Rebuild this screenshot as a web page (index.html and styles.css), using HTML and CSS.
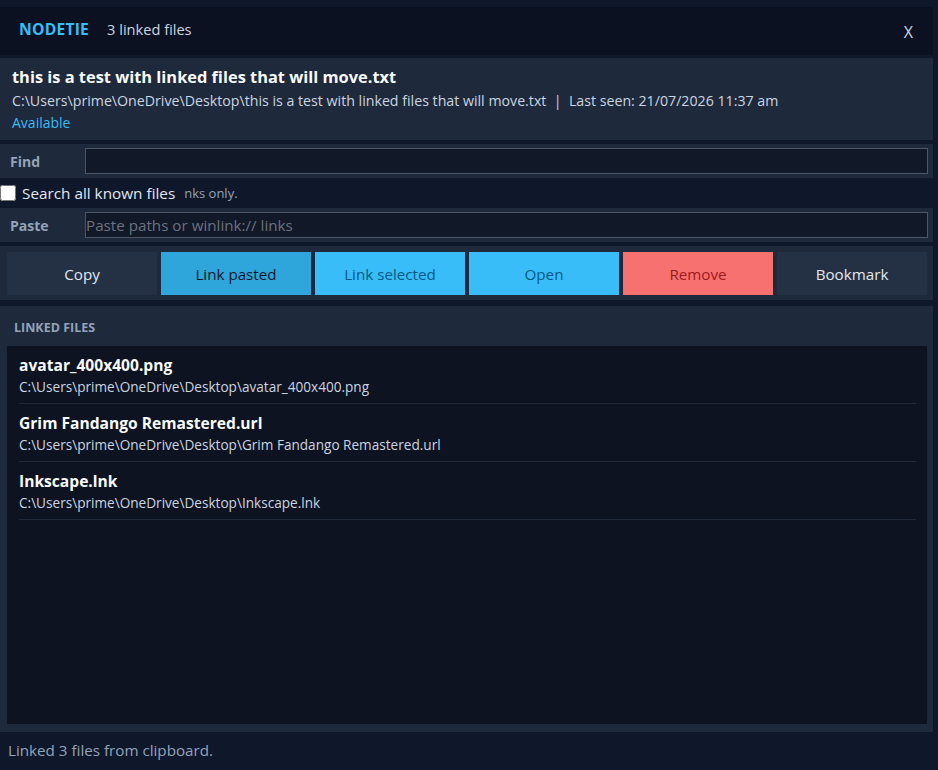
FILE: index.html
```
<!DOCTYPE html>
<html lang="en">

<head>
  <meta charset="UTF-8">
  <meta name="viewport" content="width=device-width, initial-scale=1.0">
  <title>NodeTie</title>
  <link rel="stylesheet" href="styles.css">
</head>

<body>
  <div class="app">
    <div class="header">
      <span class="brand">NODETIE</span>
      <span class="count">3 linked files</span>
      <span class="close">X</span>
    </div>

    <div class="info">
      <div class="info-title">this is a test with linked files that will move.txt</div>
      <div class="info-path">C:\Users\prime\OneDrive\Desktop\this is a test with linked files that will move.txt &nbsp;|&nbsp; Last seen: 21/07/2026 11:37 am</div>
      <div class="info-status">Available</div>
    </div>

    <div class="row">
      <label class="row-label">Find</label>
      <input type="text" class="inp">
    </div>

    <div class="check-row">
      <input type="checkbox" class="chk">
      <span class="chk-label">Search all known files</span>
      <span class="chk-hint">nks only.</span>
    </div>

    <div class="row">
      <label class="row-label">Paste</label>
      <input type="text" class="inp" placeholder="Paste paths or winlink:// links">
    </div>

    <div class="buttons">
      <button class="btn dark">Copy</button>
      <button class="btn active">Link pasted</button>
      <button class="btn blue">Link selected</button>
      <button class="btn blue">Open</button>
      <button class="btn red">Remove</button>
      <button class="btn dark">Bookmark</button>
    </div>

    <div class="linked">
      <div class="linked-title">LINKED FILES</div>
      <div class="list">
        <div class="item">
          <div class="item-name">avatar_400x400.png</div>
          <div class="item-path">C:\Users\prime\OneDrive\Desktop\avatar_400x400.png</div>
        </div>
        <div class="item">
          <div class="item-name">Grim Fandango Remastered.url</div>
          <div class="item-path">C:\Users\prime\OneDrive\Desktop\Grim Fandango Remastered.url</div>
        </div>
        <div class="item">
          <div class="item-name">Inkscape.lnk</div>
          <div class="item-path">C:\Users\prime\OneDrive\Desktop\Inkscape.lnk</div>
        </div>
      </div>
    </div>

    <div class="status">Linked 3 files from clipboard.</div>
  </div>
</body>

</html>
```

FILE: styles.css
```
* {
  box-sizing: border-box;
}

body {
  margin: 0;
  background: #0f172a;
  font-family: "Open Sans", "Noto Sans", sans-serif;
  color: #e2e8f0;
}

.app {
  padding: 7px 5px 0 0;
  display: flex;
  flex-direction: column;
  height: 770px;
}

.header {
  height: 48px;
  background: #0b1120;
  display: flex;
  align-items: center;
  padding: 0 20px 0 19px;
  margin-bottom: 3px;
}

.brand {
  color: #38bdf8;
  font-weight: 700;
  font-size: 15.7px;
  letter-spacing: 0.2px;
  margin-top: -4px;
}

.count {
  color: #cbd5e1;
  font-size: 14.6px;
  margin-left: 18px;
  margin-top: -4px;
}

.close {
  margin-left: auto;
  color: #cbd5e1;
  font-size: 16px;
  margin-top: 1px;
}

.info {
  background: #1e293b;
  height: 82px;
  padding: 7px 12px;
  margin-bottom: 4px;
}

.info-title {
  font-weight: 700;
  font-size: 16.4px;
  color: #f8fafc;
  line-height: 24px;
}

.info-path {
  font-size: 14.2px;
  color: #cbd5e1;
  line-height: 23px;
}

.info-status {
  font-size: 14px;
  color: #38bdf8;
  line-height: 22px;
}

.row {
  background: #1e293b;
  height: 34px;
  display: flex;
  align-items: center;
  padding: 0 5px 0 10px;
}

.row-label {
  width: 75px;
  font-weight: 700;
  font-size: 14px;
  color: #94a3b8;
}

.inp {
  flex: 1;
  height: 26px;
  background: #111827;
  border: 1px solid #4b5563;
  color: #e2e8f0;
  font-family: inherit;
  font-size: 15.2px;
  padding: 0 0;
  outline: none;
}

.inp::placeholder {
  color: #6b7280;
}

.check-row {
  height: 30px;
  display: flex;
  align-items: center;
}

.chk {
  width: 16px;
  height: 16px;
  margin: 0 6px 0 0;
}

.chk-label {
  font-size: 15.3px;
  color: #e2e8f0;
}

.chk-hint {
  font-size: 13px;
  color: #94a3b8;
  margin-left: 9px;
}

.buttons {
  background: #1e293b;
  margin-top: 4px;
  height: 54px;
  display: flex;
  align-items: center;
  gap: 4px;
  padding: 0 6px 0 7px;
}

.btn {
  flex: 1;
  height: 43px;
  border: none;
  font-family: inherit;
  font-size: 15.2px;
  padding-top: 2px;
}

.dark {
  background: #243044;
  color: #e2e8f0;
}

.active {
  background: #2ea6dc;
  color: #0f172a;
}

.blue {
  background: #38bdf8;
  color: #075985;
}

.red {
  background: #f87171;
  color: #991b1b;
}

.linked {
  background: #1e293b;
  margin-top: 6px;
  height: 426px;
  padding: 0 6px 8px 7px;
  display: flex;
  flex-direction: column;
}

.linked-title {
  font-size: 12.5px;
  font-weight: 700;
  color: #94a3b8;
  height: 40px;
  line-height: 44px;
  padding-left: 7px;
}

.list {
  flex: 1;
  background: #0d1320;
  padding: 0 11px 0 12px;
}

.item {
  border-bottom: 1px solid #1e293b;
  height: 58px;
  padding-top: 9px;
}

.item-name {
  font-weight: 700;
  font-size: 15.6px;
  color: #f8fafc;
  line-height: 21px;
}

.item-path {
  font-size: 13.6px;
  color: #cbd5e1;
  line-height: 21px;
}

.status {
  font-size: 15.2px;
  color: #94a3b8;
  padding: 8px 8px;
}
```
